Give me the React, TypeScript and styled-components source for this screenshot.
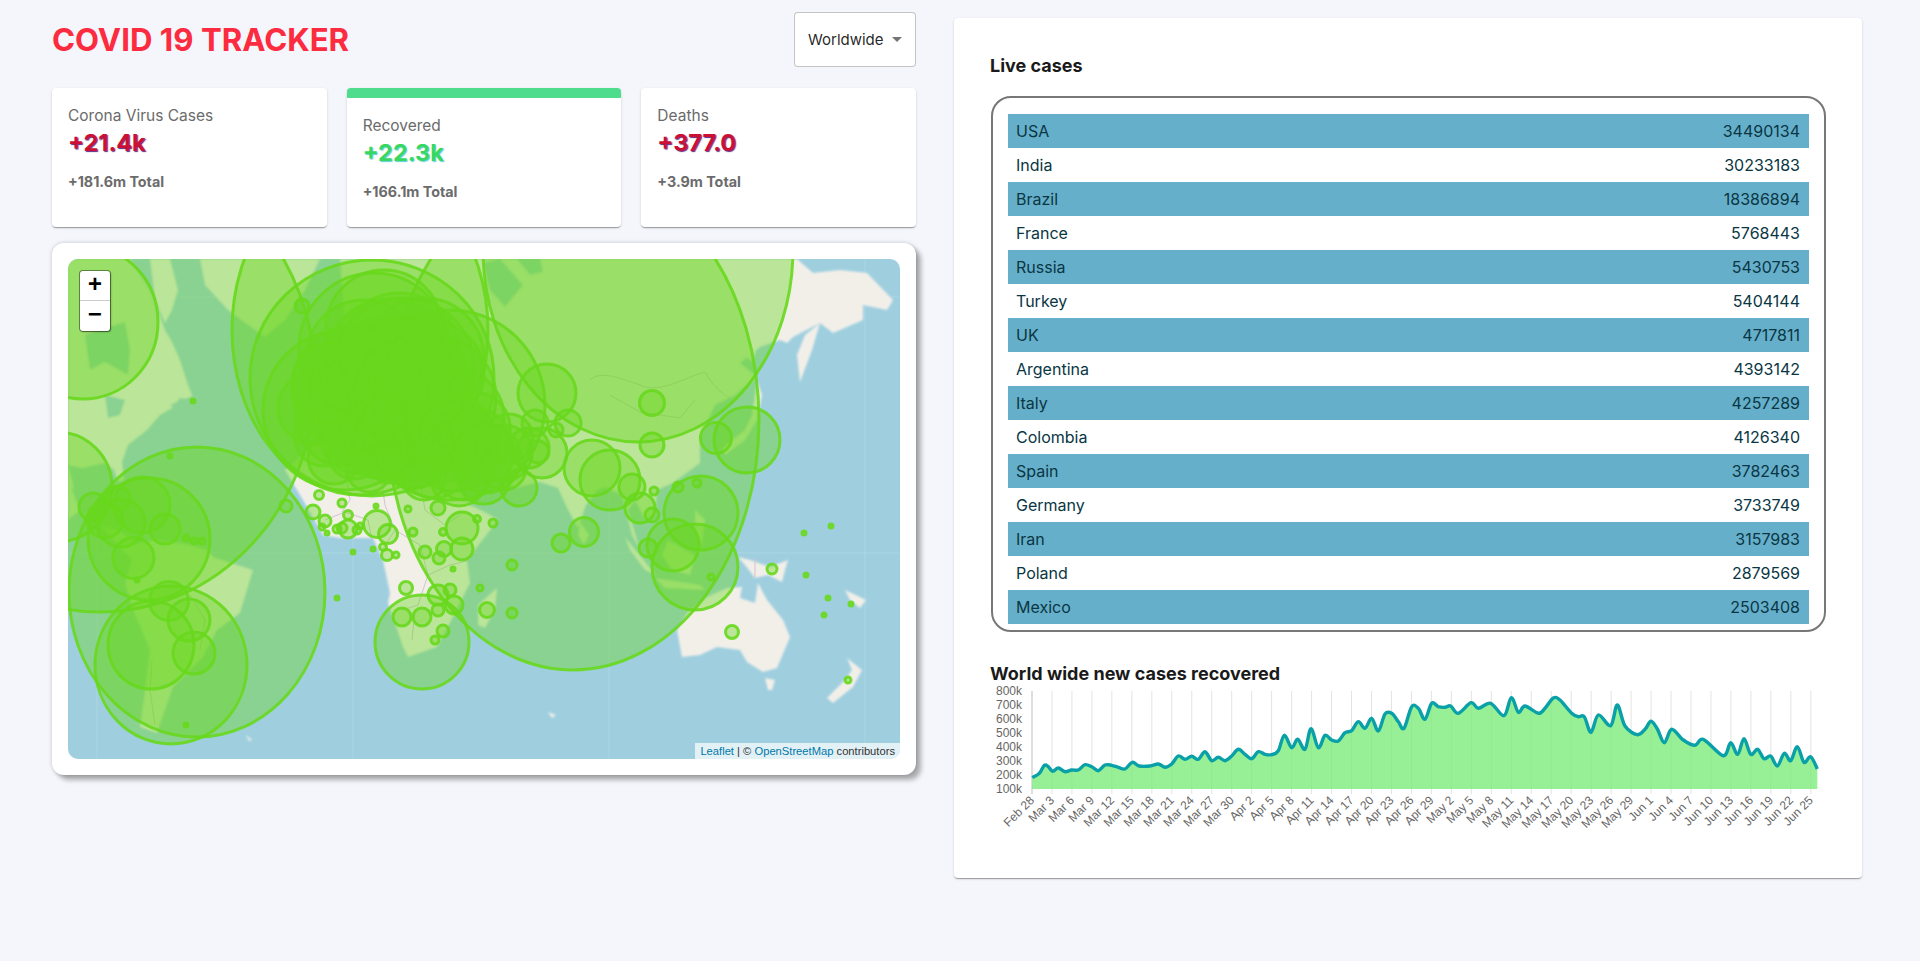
import styled, { createGlobalStyle } from 'styled-components';

const GlobalStyle = createGlobalStyle`
  * {
    box-sizing: border-box;
  }
  body {
    margin: 0;
    background-color: #f4f6fb;
    font-family: Inter, "Liberation Sans", sans-serif;
  }
`;

const countries: [string, number][] = [
  ['USA', 34490134],
  ['India', 30233183],
  ['Brazil', 18386894],
  ['France', 5768443],
  ['Russia', 5430753],
  ['Turkey', 5404144],
  ['UK', 4717811],
  ['Argentina', 4393142],
  ['Italy', 4257289],
  ['Colombia', 4126340],
  ['Spain', 3782463],
  ['Germany', 3733749],
  ['Iran', 3157983],
  ['Poland', 2879569],
  ['Mexico', 2503408],
];

// [cx, cy, rx, ry] in page pixels, the map's viewBox uses the same numbers
const bigCases: number[][] = [
  [100, 380, 215, 232],
  [83, 322, 75, 77],
  [57, 487, 55, 55],
  [197, 592, 128, 145],
  [171, 665, 76, 79],
  [151, 645, 43, 44],
  [149, 539, 61, 61],
  [638, 250, 155, 192],
  [573, 420, 186, 250],
  [360, 330, 128, 165],
  [372, 378, 122, 118],
  [450, 405, 95, 95],
  [345, 410, 82, 80],
  [695, 567, 43, 43],
  [422, 642, 47, 47],
];

const europeCases: number[][] = [
  [360, 340, 75], [390, 360, 70], [340, 380, 62], [420, 390, 62], [380, 400, 60], [350, 350, 58],
  [410, 350, 60], [370, 320, 58], [440, 410, 50], [400, 420, 52], [330, 410, 48], [365, 430, 40],
  [375, 375, 66], [395, 385, 55], [345, 395, 50], [420, 365, 50], [385, 345, 60], [460, 420, 36],
  [430, 440, 34], [400, 450, 30], [340, 445, 26], [375, 455, 20], [320, 450, 26], [355, 462, 22],
  [410, 470, 22], [445, 470, 28], [470, 445, 30], [490, 460, 22], [505, 480, 18], [355, 380, 60],
  [392, 372, 62], [375, 355, 64], [410, 405, 50], [350, 415, 44], [470, 470, 26], [515, 440, 20],
  [495, 430, 24], [400, 440, 40], [440, 438, 45], [472, 450, 35], [420, 455, 35], [450, 462, 30],
  [490, 445, 28], [380, 428, 40], [342, 430, 35], [310, 428, 30], [362, 442, 28], [300, 400, 36],
  [318, 375, 40], [440, 425, 38], [465, 432, 30],
];

const smallCases: number[][] = [
  [194, 653, 21], [189, 620, 21], [169, 601, 19.5], [133.5, 558, 20.5], [165, 529, 15], [121, 523, 24],
  [93, 507, 14], [142, 505, 28], [105, 520, 18], [118, 498, 12], [186, 538, 3], [194, 541, 3], [202, 541, 3],
  [186, 725, 2], [137, 580, 2], [193, 401, 2], [170, 456, 2], [302, 306, 7], [319, 495, 4.5], [286, 506, 6],
  [313, 512, 7], [325, 521, 6], [322, 527, 3], [327, 533, 2], [337, 529, 4], [342, 528, 5], [348, 529, 9],
  [342, 503, 4], [348, 515, 4.5], [357, 530, 4], [360, 526, 3], [376, 506, 2], [377, 524, 13.5], [388, 534, 9.5],
  [387, 555, 5.5], [396, 555, 3], [383, 547, 3.5], [373, 549, 2], [353, 552, 2], [337, 598, 2], [408, 509, 3],
  [438, 508, 7], [413, 532, 4], [443, 532, 3.5], [477, 519, 3.5], [493, 523, 4], [462, 528, 16], [462, 549, 11],
  [444, 549, 7.5], [425, 552, 6], [439, 558, 6], [453, 569, 2], [406, 588, 6.5], [438, 595, 10], [450, 590, 6],
  [454, 605, 9], [438, 610, 6], [402, 617, 9], [422, 617, 9], [443, 631, 6], [435, 640, 4], [480, 588, 3],
  [487, 610, 7.5], [512, 565, 5], [512, 613, 5], [547, 393, 29], [652, 403, 12.5], [652, 445, 12], [716, 438, 15.5],
  [747, 440, 33], [568, 423, 13], [535, 423, 13], [538, 452, 11], [542, 453, 25], [556, 430, 7], [592, 468, 28],
  [610, 480, 30], [632, 487, 13], [654, 491, 4], [640, 508, 15], [652, 515, 7], [701, 513, 37], [678, 487, 5],
  [697, 483, 4], [584, 532, 14.5], [561, 543, 9], [673, 545, 26], [648, 548, 9], [711, 577, 3], [772, 569, 5],
  [732, 632, 6.5], [848, 680, 3], [804, 533, 2], [831, 526, 2], [806, 575, 2], [828, 598, 2], [851, 604, 2], [824, 615, 2],
];

const landShapes = [
  // north america
  'M68 259L130 259L150 290L165 330L172 342L180 360L188 385L194 400L180 398L172 408L160 415L147 430L128 445L122 462L124 480L118 482L114 470L105 463L82 468L72 490L80 510L68 520Z',
  // baffin and the arctic islands
  'M150 259L170 259L178 290L172 310L165 323L155 300Z',
  // greenland
  'M200 259L320 259L305 290L285 320L265 337L248 325L228 310L205 285Z',
  // south america
  'M100 525L118 530L137 543L160 540L190 545L207 550L213 557L253 570L240 613L217 630L203 657L173 687L165 710L157 733L140 727L145 690L150 650L133 610L125 583L132 560Z',
  // africa
  'M285 470L300 495L307 507L323 535L340 538L373 538L383 560L390 593L388 603L403 647L408 657L437 647L453 617L470 583L467 560L498 520L487 513L470 505L455 480L440 440L340 420Z',
  // eurasia
  'M340 259L797 259L813 273L840 270L867 273L893 300L887 310L863 305L863 320L833 333L820 323L793 337L787 343L780 340L760 347L740 363L757 377L735 395L715 405L700 437L700 463L673 483L657 490L655 515L645 520L635 500L628 510L640 550L632 535L622 495L605 487L598 490L586 505L578 528L568 510L558 488L540 482L515 488L490 475L470 455L440 440L340 420L300 440L330 380L345 330Z',
  // kamchatka
  'M820 323L812 350L800 382L797 355L805 335Z',
  // japan and sakhalin
  'M757 380L762 395L757 420L745 440L725 455L722 448L745 430L752 415Z',
  // sumatra, borneo and the islands
  'M625 537L650 568L657 575L645 570L630 550Z',
  'M668 540L695 555L690 575L672 570L662 555Z',
  'M655 578L700 585L705 590L665 588Z',
  'M695 510L705 520L702 545L695 530Z',
  // new guinea
  'M738 557L750 560L770 567L788 560L785 570L782 582L768 575L755 578L745 565Z',
  // australia
  'M677 630L682 657L700 655L717 647L740 650L747 662L763 672L777 668L790 637L783 620L767 600L758 583L755 603L740 598L742 587L727 588L707 597L687 613Z',
  'M765 678L775 680L772 690L768 690Z',
  // new zealand
  'M847 658L862 670L853 687L833 703L827 698L843 682L852 670Z',
  // madagascar and sri lanka
  'M497 588L495 610L485 628L478 625L478 605Z',
  'M580 522L589 535L584 545L578 535Z',
  // small islands
  'M745 355L756 350L752 362Z',
  'M845 590L866 600L860 608L850 600Z',
  'M548 712L556 715L552 718Z',
  'M246 735L252 740L249 741Z',
];

const waterShapes = [
  // hudson bay and the great lakes, they read darker through the circles
  'M85 335L125 322L130 350L128 375L105 362L90 370Z',
  'M105 395L125 400L120 415L108 418Z',
  'M170 405L195 395L190 402L178 410Z',
  'M68 465L112 475L118 490L100 493L75 492Z',
  // baltic and norwegian coast
  'M483 263L500 259L523 285L505 307L490 290Z',
  'M517 259L540 259L543 272L530 275Z',
];

const borderLines = [
  'M325 520L345 512L368 520L372 540',
  'M345 470L350 500L342 512',
  'M380 470L385 505L395 530L382 550',
  'M395 530L420 545L428 575L418 605L402 610',
  'M428 575L450 565L470 560',
  'M420 480L425 510L445 525L460 515',
  'M415 610L412 640',
  'M590 380C600 370 620 378 640 385C660 395 690 375 705 372C715 390 725 395 735 402',
  'M610 395L640 412L680 418L695 400',
  'M152 660L150 690L155 725',
  'M190 595L205 620L200 650',
];

const chartLine: number[][] = [
  [157, 353], [178, 340], [193, 316], [205, 320], [218, 334], [235, 324], [255, 335], [275, 330], [295, 330], [315, 314],
  [335, 320], [355, 332], [375, 315], [395, 316], [415, 322], [435, 327], [457, 307], [478, 318], [510, 318], [535, 312],
  [555, 322], [575, 312], [595, 288], [615, 298], [635, 289], [655, 298], [675, 275], [695, 302], [715, 292], [735, 302],
  [755, 288], [775, 268], [795, 283], [815, 296], [835, 275], [855, 283], [875, 284], [895, 272], [913, 226], [935, 263],
  [953, 238], [975, 268], [993, 206], [1015, 263], [1035, 226], [1055, 240], [1075, 243], [1095, 218], [1115, 212], [1135, 185],
  [1155, 205], [1175, 175], [1195, 213], [1215, 162], [1235, 160], [1255, 185], [1272, 205], [1295, 140], [1315, 145], [1335, 178],
  [1355, 130], [1375, 140], [1395, 142], [1412, 138], [1435, 160], [1473, 128], [1495, 145], [1532, 130], [1572, 167], [1594, 113],
  [1615, 157], [1635, 138], [1675, 160], [1695, 145], [1720, 114], [1740, 120], [1775, 160], [1795, 170], [1813, 170], [1833, 217],
  [1855, 165], [1892, 197], [1912, 135], [1935, 198], [1972, 224], [1995, 208], [2013, 184], [2032, 207], [2053, 248], [2075, 208],
  [2110, 240], [2145, 256], [2170, 238], [2230, 287], [2252, 248], [2273, 283], [2292, 236], [2312, 283], [2333, 268], [2352, 296],
  [2372, 288], [2392, 318], [2413, 280], [2432, 302], [2452, 260], [2472, 307], [2492, 290], [2512, 327],
].map(([x, y]) => [980 + x / 3, 660 + y / 3]);

const xLabels = [
  'Feb 28', 'Mar 3', 'Mar 6', 'Mar 9', 'Mar 12', 'Mar 15', 'Mar 18', 'Mar 21', 'Mar 24', 'Mar 27', 'Mar 30',
  'Apr 2', 'Apr 5', 'Apr 8', 'Apr 11', 'Apr 14', 'Apr 17', 'Apr 20', 'Apr 23', 'Apr 26', 'Apr 29',
  'May 2', 'May 5', 'May 8', 'May 11', 'May 14', 'May 17', 'May 20', 'May 23', 'May 26', 'May 29',
  'Jun 1', 'Jun 4', 'Jun 7', 'Jun 10', 'Jun 13', 'Jun 16', 'Jun 19', 'Jun 22', 'Jun 25',
];

const yLabels = ['800k', '700k', '600k', '500k', '400k', '300k', '200k', '100k'];

const smoothPath = (pts: number[][]) => {
  let d = `M${pts[0][0]} ${pts[0][1]}`;
  for (let i = 0; i < pts.length - 1; i++) {
    const p0 = pts[i - 1] || pts[i];
    const p1 = pts[i];
    const p2 = pts[i + 1];
    const p3 = pts[i + 2] || p2;
    const c1x = p1[0] + (p2[0] - p0[0]) / 6;
    const c1y = p1[1] + (p2[1] - p0[1]) / 6;
    const c2x = p2[0] - (p3[0] - p1[0]) / 6;
    const c2y = p2[1] - (p3[1] - p1[1]) / 6;
    d += `C${c1x.toFixed(1)} ${c1y.toFixed(1)} ${c2x.toFixed(1)} ${c2y.toFixed(1)} ${p2[0].toFixed(1)} ${p2[1].toFixed(1)}`;
  }
  return d;
};

const WorldMap = () => (
  <MapSvg viewBox="68 259 832 500" preserveAspectRatio="none">
    <defs>
      <filter id="soften" x="-5%" y="-5%" width="110%" height="110%">
        <feGaussianBlur stdDeviation="1" />
      </filter>
    </defs>
    <rect x="68" y="259" width="832" height="500" fill="#9fcfdf" />
    {[97, 353, 609, 865].map((x) => (
      <line key={x} x1={x} x2={x} y1="259" y2="759" stroke="#fff" strokeOpacity="0.14" />
    ))}
    {[297, 553].map((y) => (
      <line key={y} x1="68" x2="900" y1={y} y2={y} stroke="#fff" strokeOpacity="0.14" />
    ))}
    <g filter="url(#soften)">
      {landShapes.map((d) => (
        <path key={d} d={d} fill="#f2efe9" />
      ))}
      {waterShapes.map((d) => (
        <path key={d} d={d} fill="#9fcfdf" />
      ))}
    </g>
    {borderLines.map((d) => (
      <path key={d} d={d} fill="none" stroke="#c9b9cb" strokeWidth="0.8" />
    ))}
    <line x1="755" x2="755" y1="558" y2="578" stroke="#d8c0cc" strokeWidth="1" />
    <g fill="#68d81d" fillOpacity="0.4" stroke="#68d81d" strokeWidth="3" strokeOpacity="0.9">
      {bigCases.map(([cx, cy, rx, ry]) => (
        <ellipse key={`${cx}-${cy}`} cx={cx} cy={cy} rx={rx} ry={ry} />
      ))}
      <g transform="translate(14 8)">
        {europeCases.map(([cx, cy, r]) => (
          <circle key={`${cx}-${cy}`} cx={cx} cy={cy} r={r} />
        ))}
      </g>
      {smallCases.map(([cx, cy, r]) => (
        <circle key={`${cx}-${cy}`} cx={cx} cy={cy} r={r} />
      ))}
    </g>
  </MapSvg>
);

const RecoveredChart = () => {
  const line = smoothPath(chartLine);
  const last = chartLine[chartLine.length - 1];
  return (
    <ChartSvg viewBox="980 678 860 168">
      {xLabels.map((label, i) => {
        const x = 1032 + i * 19.97;
        return (
          <g key={label}>
            <line x1={x} x2={x} y1="691" y2="794" stroke={i === 0 ? '#bdbdbd' : '#e3e3e3'} />
            <text x={x + 3} y="801" textAnchor="end" transform={`rotate(-45 ${x + 3} 801)`} fontSize="12" fill="#666" fontFamily="Liberation Sans, sans-serif">
              {label}
            </text>
          </g>
        );
      })}
      {yLabels.map((label, i) => (
        <text key={label} x="1022" y={695 + i * 14} textAnchor="end" fontSize="12" fill="#666" fontFamily="Liberation Sans, sans-serif">
          {label}
        </text>
      ))}
      <path d={`${line}L${last[0]} 789L1032 789Z`} fill="#7aec78" fillOpacity="0.78" />
      <path d={line} fill="none" stroke="#0aa0a8" strokeWidth="3.4" />
    </ChartSvg>
  );
};

const App = () => (
  <>
    <GlobalStyle />
    <AppLayout>
      <LeftColumn>
        <Header>
          <Title>COVID 19 TRACKER</Title>
          <Dropdown>
            Worldwide
            <Caret />
          </Dropdown>
        </Header>
        <Stats>
          <InfoBox>
            <InfoTitle>Corona Virus Cases</InfoTitle>
            <InfoNumber>+21.4k</InfoNumber>
            <InfoTotal>+181.6m Total</InfoTotal>
          </InfoBox>
          <InfoBox $selected>
            <InfoTitle>Recovered</InfoTitle>
            <InfoNumber $green>+22.3k</InfoNumber>
            <InfoTotal>+166.1m Total</InfoTotal>
          </InfoBox>
          <InfoBox>
            <InfoTitle>Deaths</InfoTitle>
            <InfoNumber>+377.0</InfoNumber>
            <InfoTotal>+3.9m Total</InfoTotal>
          </InfoBox>
        </Stats>
        <MapCard>
          <MapFrame>
            <WorldMap />
            <ZoomControl>
              <ZoomButton>+</ZoomButton>
              <ZoomButton>−</ZoomButton>
            </ZoomControl>
            <Attribution>
              <AttributionLink>Leaflet</AttributionLink> | © <AttributionLink>OpenStreetMap</AttributionLink> contributors
            </Attribution>
          </MapFrame>
        </MapCard>
      </LeftColumn>
      <SidePanel>
        <SectionTitle>Live cases</SectionTitle>
        <TableBox>
          <CasesTable>
            <tbody>
              {countries.map(([name, cases]) => (
                <tr key={name}>
                  <td>{name}</td>
                  <td>{cases}</td>
                </tr>
              ))}
            </tbody>
          </CasesTable>
        </TableBox>
        <ChartTitle>World wide new cases recovered</ChartTitle>
        <RecoveredChart />
      </SidePanel>
    </AppLayout>
  </>
);

export default App;

const AppLayout = styled.div`
  display: flex;
  justify-content: space-between;
  align-items: flex-start;

  min-height: 961px;
  padding: 12px 58px 0 52px;
`;

const LeftColumn = styled.div`
  display: flex;
  flex-direction: column;

  width: 864px;
`;

const Header = styled.div`
  display: flex;
  justify-content: space-between;
  align-items: center;

  height: 55px;
  margin-bottom: 21px;
`;

const Title = styled.h1`
  margin: 0;

  color: #fc2b3f;
  font-size: 31.2px;
  font-weight: 700;
`;

const Dropdown = styled.div`
  display: flex;
  align-items: center;

  width: 122px;
  height: 55px;
  padding-left: 13px;

  background-color: white;
  border: 1px solid rgba(0, 0, 0, 0.23);
  border-radius: 4px;

  color: rgba(0, 0, 0, 0.87);
  font-size: 15px;
`;

const Caret = styled.span`
  width: 0;
  height: 0;
  margin-left: 8px;

  border-left: 5px solid transparent;
  border-right: 5px solid transparent;
  border-top: 5px solid #757575;
`;

const Stats = styled.div`
  display: grid;
  grid-template-columns: repeat(3, 1fr);
  gap: 20px;

  margin-bottom: 16px;
`;

const InfoBox = styled.div<{ $selected?: boolean }>`
  height: 139px;
  padding: 16px;

  background-color: white;
  border-top: ${({ $selected }) => ($selected ? '10px solid #4fdc8c' : '0')};
  border-radius: 4px;
  box-shadow: 0 2px 1px -1px rgba(0, 0, 0, 0.2), 0 1px 1px 0 rgba(0, 0, 0, 0.14), 0 1px 3px 0 rgba(0, 0, 0, 0.12);
`;

const InfoTitle = styled.div`
  color: #6b6b6b;
  font-size: 15.5px;
  line-height: 23px;
`;

const InfoNumber = styled.div<{ $green?: boolean }>`
  color: ${({ $green }) => ($green ? '#38d860' : '#cc1034')};
  font-size: 23.5px;
  font-weight: 700;
  line-height: 32px;
  text-shadow: ${({ $green }) => ($green ? '1px 1px 1px #5fd0e0' : '1px 1px 1px #5b2a8a')};
`;

const InfoTotal = styled.div`
  margin-top: 12px;

  color: #6b6b6b;
  font-size: 14.3px;
  font-weight: 700;
  line-height: 21px;
`;

const MapCard = styled.div`
  height: 532px;
  padding: 16px;

  background-color: white;
  border-radius: 12px;
  box-shadow: 5px 5px 5px rgba(0, 0, 0, 0.3), 0 0 4px rgba(0, 0, 0, 0.2);
`;

const MapFrame = styled.div`
  position: relative;

  height: 500px;
  overflow: hidden;

  border-radius: 10px;
`;

const MapSvg = styled.svg`
  display: block;

  width: 100%;
  height: 100%;
`;

const ZoomControl = styled.div`
  position: absolute;
  top: 12px;
  left: 12px;

  display: flex;
  flex-direction: column;

  width: 30px;
  overflow: hidden;

  background-color: white;
  border-radius: 3px;
  box-shadow: 0 0 0 1px rgba(0, 0, 0, 0.4), 1px 1px 2px rgba(0, 0, 0, 0.3);
`;

const ZoomButton = styled.div`
  height: 30px;

  border-bottom: 1px solid #ccc;

  color: black;
  font-family: "Liberation Mono", monospace;
  font-size: 24px;
  font-weight: 700;
  line-height: 30px;
  text-align: center;

  &:last-child {
    border-bottom: 0;
  }
`;

const Attribution = styled.div`
  position: absolute;
  right: 0;
  bottom: 0;

  padding: 0 5px;

  background-color: rgba(255, 255, 255, 0.7);

  color: #333;
  font-family: "Liberation Sans", sans-serif;
  font-size: 11.2px;
  line-height: 16px;
`;

const AttributionLink = styled.span`
  color: #0078a8;
`;

const SidePanel = styled.div`
  display: flex;
  flex-direction: column;

  width: 908px;
  height: 860px;
  margin-top: 6px;
  padding: 34px 36px;

  background-color: white;
  border-radius: 4px;
  box-shadow: 0 2px 1px -1px rgba(0, 0, 0, 0.2), 0 1px 1px 0 rgba(0, 0, 0, 0.14), 0 1px 3px 0 rgba(0, 0, 0, 0.12);
`;

const SectionTitle = styled.h3`
  margin: 0 0 17px;

  color: #1a1a1a;
  font-size: 18px;
  font-weight: 700;
  line-height: 27px;
`;

const TableBox = styled.div`
  height: 536px;
  margin-left: 1px;
  padding: 16px 15px;

  border: 2px solid #777;
  border-radius: 20px;
`;

const CasesTable = styled.table`
  width: 100%;

  border-collapse: collapse;

  color: #0a3644;
  font-size: 16px;

  td {
    height: 34px;
    padding: 0 9px 0 8px;
  }

  td:last-child {
    text-align: right;
  }

  tr:nth-of-type(odd) {
    background-color: #66afca;
  }
`;

const ChartTitle = styled(SectionTitle)`
  margin: 28px 0 0;
`;

const ChartSvg = styled.svg`
  display: block;
  flex-shrink: 0;

  width: 860px;
  height: 168px;
  margin: -9px 0 0 -10px;
`;
